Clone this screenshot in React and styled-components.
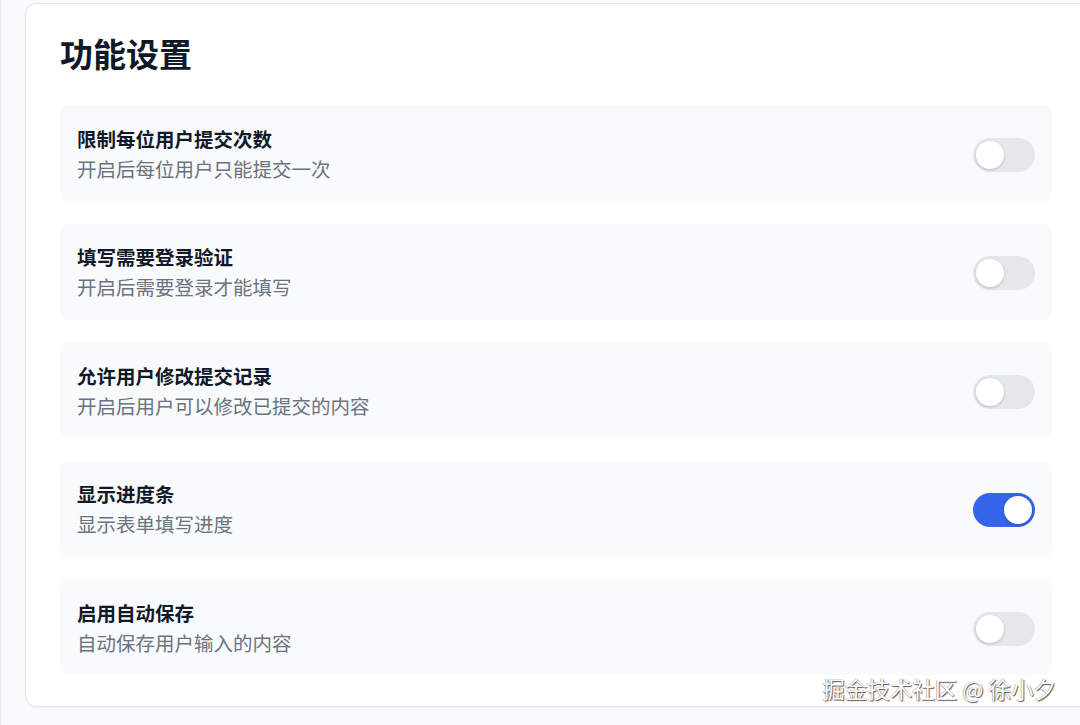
import React, { useState } from 'react';
import styled, { createGlobalStyle } from 'styled-components';

const GlobalStyle = createGlobalStyle`
  body {
    margin: 0;
    background: #f9fafb;
    font-family: Inter, "Noto Sans CJK SC", sans-serif;
  }
`;

const Page = styled.div`
  width: 1080px;
  height: 725px;
  overflow: hidden;
  position: relative;
  padding: 3px 0 0 24px;
  box-sizing: border-box;
  border-left: 1px solid #e9eaec;
`;

const Card = styled.div`
  width: 1100px;
  height: 704px;
  box-sizing: border-box;
  background: #fff;
  border: 1px solid #e5e7eb;
  border-radius: 12px;
  box-shadow: 0 1px 3px rgba(0, 0, 0, 0.05);
  padding: 29px 0 0 34px;
`;

const Title = styled.h2`
  margin: 0 0 28px;
  font-size: 33px;
  line-height: 44px;
  font-weight: 700;
  color: #111827;
`;

const List = styled.div`
  width: 992px;
  display: flex;
  flex-direction: column;
  gap: 22.5px;
`;

const Row = styled.div`
  height: 96px;
  box-sizing: border-box;
  display: flex;
  align-items: center;
  justify-content: space-between;
  padding: 3px 17px 0;
  background: #f8fafc;
  border-radius: 8px;
`;

const Label = styled.div`
  font-size: 19.5px;
  line-height: 30px;
  font-weight: 600;
  color: #111827;
`;

const Hint = styled.div`
  font-size: 19.5px;
  line-height: 30px;
  color: #6b7280;
`;

const Track = styled.button`
  position: relative;
  width: 62px;
  height: 34px;
  border: none;
  padding: 0;
  border-radius: 17px;
  cursor: pointer;
  background: ${({ $on }) => ($on ? '#3563e9' : '#e4e7ec')};
`;

const Knob = styled.span`
  position: absolute;
  top: 3px;
  left: ${({ $on }) => ($on ? '31px' : '3px')};
  width: 28px;
  height: 28px;
  border-radius: 50%;
  background: #fff;
  box-shadow: 0 1px 3px rgba(0, 0, 0, 0.2);
  transition: left 0.2s;
`;

const Watermark = styled.div`
  position: absolute;
  right: 24px;
  bottom: 21px;
  font-size: 22.5px;
  color: #fff;
  text-shadow: 1px 1px 1px #555, -0.5px -0.5px 0.5px #888;
  font-family: "Noto Sans CJK SC", sans-serif;
`;

const settings = [
  { key: 'limit', label: '限制每位用户提交次数', hint: '开启后每位用户只能提交一次', on: false },
  { key: 'login', label: '填写需要登录验证', hint: '开启后需要登录才能填写', on: false },
  { key: 'edit', label: '允许用户修改提交记录', hint: '开启后用户可以修改已提交的内容', on: false },
  { key: 'progress', label: '显示进度条', hint: '显示表单填写进度', on: true },
  { key: 'autosave', label: '启用自动保存', hint: '自动保存用户输入的内容', on: false },
];

export default function App() {
  const [values, setValues] = useState(
    Object.fromEntries(settings.map((s) => [s.key, s.on]))
  );

  return (
    <Page>
      <GlobalStyle />
      <Card>
        <Title>功能设置</Title>
        <List>
          {settings.map((s) => (
            <Row key={s.key}>
              <div>
                <Label>{s.label}</Label>
                <Hint>{s.hint}</Hint>
              </div>
              <Track
                $on={values[s.key]}
                onClick={() => setValues({ ...values, [s.key]: !values[s.key] })}
              >
                <Knob $on={values[s.key]} />
              </Track>
            </Row>
          ))}
        </List>
      </Card>
      <Watermark>掘金技术社区 @ 徐小夕</Watermark>
    </Page>
  );
}
